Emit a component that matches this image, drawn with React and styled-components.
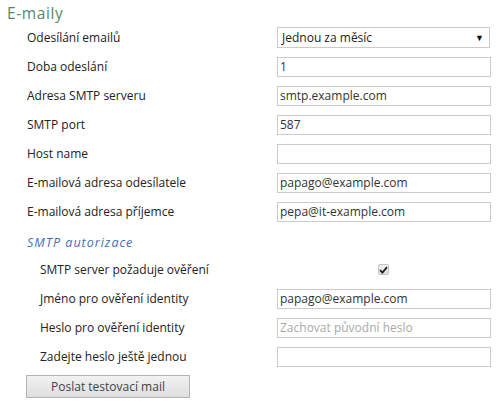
import React from "react";
import styled, { createGlobalStyle } from "styled-components";

const Global = createGlobalStyle`
  html, body { margin: 0; padding: 0; background: #fff; }
  body { font-family: "Open Sans", "Noto Sans", sans-serif; color: #222; }
  * { box-sizing: border-box; }
`;

const Page = styled.div`
  padding: 0 0 0 7px;
  width: 500px;
`;

const Heading = styled.h2`
  margin: 0;
  height: 23px;
  font-size: 15.5px;
  line-height: 26px;
  font-weight: 400;
  letter-spacing: 0.6px;
  color: #4f8a6d;
`;

const Section = styled.div`
  display: flex;
  flex-direction: column;
  padding-left: ${(p) => p.$indent}px;
`;

const Row = styled.div`
  display: grid;
  grid-template-columns: ${(p) => p.$labelWidth}px 214px;
  height: 29px;
  align-items: center;
`;

const Label = styled.label`
  font-size: 12px;
  color: #222;
`;

const Field = styled.input`
  width: 214px;
  height: 20px;
  border: 1px solid #cacaca;
  padding: 0 2px;
  font: inherit;
  font-size: 12px;
  color: #333;
  outline: none;
  &::placeholder { color: #aaa; }
`;

const Select = styled.div`
  width: 213px;
  height: 21px;
  border: 1px solid #cacaca;
  display: flex;
  align-items: center;
  justify-content: space-between;
  padding: 0 5px 0 4px;
  font-size: 12px;
  color: #222;
`;

const Arrow = styled.span`
  font-size: 9px;
  color: #111;
`;

const SubHeading = styled.div`
  height: 29px;
  padding-left: 20px;
  font-size: 12.5px;
  line-height: 34px;
  font-style: italic;
  letter-spacing: 1px;
  color: #3f6fb0;
`;

const CheckCell = styled.div`
  display: flex;
  justify-content: center;
`;

const CheckBox = styled.span`
  width: 11px;
  height: 11px;
  border: 1px solid #c4c4c4;
  border-radius: 2px;
  background: linear-gradient(#f2f2f2, #dedede);
  display: flex;
  align-items: center;
  justify-content: center;
  margin-left: -2px;
`;

const Button = styled.button`
  margin: 4px 0 0 19px;
  width: 164px;
  height: 23px;
  border: 1px solid #b4b4b4;
  background: linear-gradient(#f2f2f2, #dedede);
  font: inherit;
  font-size: 12px;
  color: #444;
  padding: 0;
`;

const mainRows = [
  ["Doba odeslání", "1"],
  ["Adresa SMTP serveru", "smtp.example.com"],
  ["SMTP port", "587"],
  ["Host name", ""],
  ["E-mailová adresa odesílatele", "papago@example.com"],
  ["E-mailová adresa příjemce", "pepa@it-example.com"],
];

export default function App() {
  return (
    <Page>
      <Global />
      <Heading>E-maily</Heading>
      <Section $indent={20}>
        <Row $labelWidth={250}>
          <Label>Odesílání emailů</Label>
          <Select>
            <span>Jednou za měsíc</span>
            <Arrow>▼</Arrow>
          </Select>
        </Row>
        {mainRows.map(([label, value]) => (
          <Row key={label} $labelWidth={250}>
            <Label>{label}</Label>
            <Field defaultValue={value} />
          </Row>
        ))}
      </Section>
      <SubHeading>SMTP autorizace</SubHeading>
      <Section $indent={33}>
        <Row $labelWidth={237}>
          <Label>SMTP server požaduje ověření</Label>
          <CheckCell>
            <CheckBox>
              <svg width="9" height="8" viewBox="0 0 9 8">
                <path d="M1 4.2 L3.4 6.6 L8 1.2" fill="none" stroke="#222" strokeWidth="1.8" />
              </svg>
            </CheckBox>
          </CheckCell>
        </Row>
        <Row $labelWidth={237}>
          <Label>Jméno pro ověření identity</Label>
          <Field defaultValue="papago@example.com" />
        </Row>
        <Row $labelWidth={237}>
          <Label>Heslo pro ověření identity</Label>
          <Field type="password" placeholder="Zachovat původní heslo" />
        </Row>
        <Row $labelWidth={237}>
          <Label>Zadejte heslo ještě jednou</Label>
          <Field type="password" />
        </Row>
      </Section>
      <Button>Poslat testovací mail</Button>
    </Page>
  );
}
